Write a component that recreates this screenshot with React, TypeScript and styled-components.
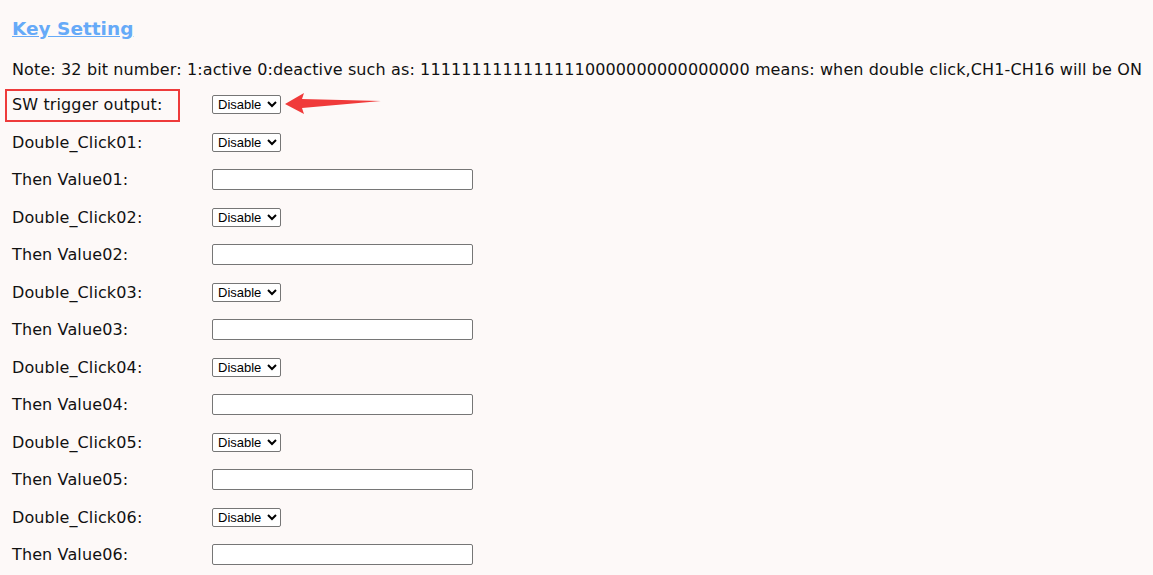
import React from "react";
import styled, { createGlobalStyle } from "styled-components";

const Global = createGlobalStyle`
  html, body { margin: 0; padding: 0; background: #fdf9f8; }
  body { font-family: "DejaVu Sans", Verdana, sans-serif; color: #111; }
`;

const Page = styled.div`
  padding: 15px 12px 0 12px;
`;

const Title = styled.a`
  display: inline-block;
  font-size: 18.5px;
  font-weight: bold;
  color: #66aaf8;
  text-decoration: underline;
  line-height: 28px;
`;

const Note = styled.p`
  margin: 12px 0 0 0;
  font-size: 16px;
  letter-spacing: 0.12px;
  line-height: 30px;
  white-space: nowrap;
`;

const Form = styled.div`
  display: grid;
  grid-template-columns: 200px 1fr;
  grid-auto-rows: 37.5px;
  align-items: center;
  margin-top: 1px;
`;

const Label = styled.div<{ $boxed?: boolean }>`
  position: relative;
  font-size: 16px;
  letter-spacing: 0.12px;
  line-height: 19px;
  ${(p) =>
    p.$boxed &&
    `&::after { content: ""; position: absolute; left: -7px; top: -6px; width: 175px; height: 33px; box-sizing: border-box; border: 2px solid #ee3b3b; }`}
`;

const Field = styled.div`
  position: relative;
  display: flex;
  align-items: center;
`;

const Select = styled.select`
  font-family: Arial, "Liberation Sans", sans-serif;
  font-size: 13px;
  height: 19px;
  width: 69px;
  padding: 0 0 0 1px;
  border: 1px solid #767676;
  border-radius: 2px;
  background: #fff;
  color: #000;
`;

const Input = styled.input`
  width: 261px;
  height: 21px;
  box-sizing: border-box;
  border: 1px solid #767676;
  border-radius: 2px;
  background: #fff;
`;

const Arrow = styled.svg`
  position: absolute;
  left: 72px;
  top: -7px;
`;

const rows = ["01", "02", "03", "04", "05", "06"];

export default function App() {
  return (
    <Page>
      <Global />
      <Title href="#">Key Setting</Title>
      <Note>
        Note: 32 bit number: 1:active 0:deactive such as: 11111111111111110000000000000000 means: when double
        click,CH1-CH16 will be ON
      </Note>
      <Form>
        <Label $boxed>SW trigger output:</Label>
        <Field>
          <Select defaultValue="Disable">
            <option>Disable</option>
            <option>Enable</option>
          </Select>
          <Arrow width="100" height="30" viewBox="0 0 100 30">
            <polygon points="1,16 20,5 18,11 97,13 18,20 20,26" fill="#f03a3a" />
          </Arrow>
        </Field>
        {rows.map((n) => (
          <React.Fragment key={n}>
            <Label>Double_Click{n}:</Label>
            <Field>
              <Select defaultValue="Disable">
                <option>Disable</option>
                <option>Enable</option>
              </Select>
            </Field>
            <Label>Then Value{n}:</Label>
            <Field>
              <Input type="text" />
            </Field>
          </React.Fragment>
        ))}
      </Form>
    </Page>
  );
}
